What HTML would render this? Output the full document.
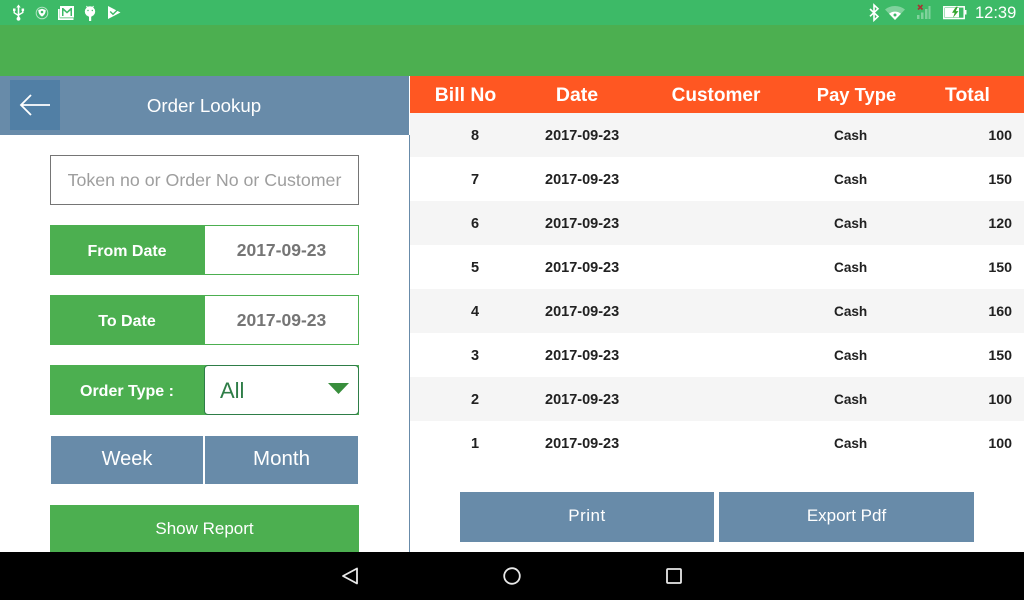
<!DOCTYPE html>
<html><head><meta charset="utf-8"><style>
html,body{margin:0;padding:0;width:1024px;height:600px;overflow:hidden;background:#fff}
body{position:relative;font-family:"Liberation Sans",sans-serif}
.a{position:absolute;box-sizing:border-box}
.c{position:absolute;box-sizing:border-box;display:flex;align-items:center;justify-content:center;white-space:nowrap}
.g{background:#4caf50;color:#fff;font-weight:700;font-size:16px;padding-top:3px}
.b{background:#688ba9;color:#fff;font-size:20px}
.d{background:#fff;border:1px solid #4caf50;color:#757575;font-weight:700;font-size:17.5px;padding-top:1px}
.r{position:absolute;left:410px;width:614px;height:44px}
.r span{position:absolute;top:1px;line-height:44px;font-weight:700;font-size:14.5px;color:#212121;white-space:nowrap}
.r span:nth-child(3){font-size:13.6px}
.r span:nth-child(4){font-size:14.2px}
.h{position:absolute;top:77px;line-height:37px;font-weight:700;font-size:19px;color:#fff;white-space:nowrap;transform:translateX(-50%)}
</style></head><body>
<div class="a" style="left:0;top:0;width:1024px;height:25px;background:#3dba67"></div>
<div class="a" style="left:0;top:25px;width:1024px;height:51px;background:#4caf50"></div>

<svg class="a" style="left:0;top:0" width="130" height="25" fill="#fff" stroke="none">
<path d="M18.5 6V19" stroke="#fff" stroke-width="1.6"/><path d="M18.5 4.5l-2.2 3h4.400z"/><path d="M14.2 10.500v2.300l4.300 2.700M22.800 10.500v2l-4.300 2.500" fill="none" stroke="#fff" stroke-width="1.4"/><circle cx="18.5" cy="18.800" r="1.900"/><rect x="13" y="8.500" width="2.500" height="2.500"/><rect x="21.600" y="8.500" width="2.500" height="2.500"/>
<circle cx="42" cy="13" r="5.800" fill="none" stroke="#fff" stroke-opacity=".6"/><path d="M38.300 10l3.700-1.200 3.700 1.200c0 3-1.200 5.200-3.700 6.600-2.500-1.400-3.700-3.600-3.700-6.600z"/><circle cx="42" cy="12" r="1.300" fill="#3dba67"/>
<path d="M58 9v11h15.500v-1.700H59.700V9z"/><rect x="60" y="6" width="14" height="11.500"/><path d="M62 8v8h1.500v-5.500l3.500 3 3.500-3V16H72V8h-1.300L67 11.500 63.300 8z" fill="#3dba67"/>
<circle cx="90" cy="11.500" r="5.200"/><rect x="89" y="15" width="2.200" height="6"/><path d="M86.500 6l1.300 2M93.500 6l-1.300 2" stroke="#fff"/><circle cx="88" cy="10.500" r=".7" fill="#3dba67"/><circle cx="92.300" cy="10.500" r=".7" fill="#3dba67"/>
<path d="M108 6L120.500 12.500 108 19z"/><path d="M110.200 11.500l2.800 2.800 4.800-4.700" stroke="#3dba67" stroke-width="1.400" fill="none"/>
</svg>

<svg class="a" style="left:860px;top:0" width="110" height="25">
<path d="M10 9l8 7.500-4 3.800V5l4 3.800-8 7.500" fill="none" stroke="#fff" stroke-width="1.600"/>
<path d="M25 9.500a16 16 0 0 1 20 0L35 20z" fill="#fff" fill-opacity=".35"/><path d="M29 13.800a9.500 9.500 0 0 1 12 0L35 20z" fill="#fff"/><circle cx="35" cy="15" r="1.500" fill="#3dba67"/>
<g fill="#fff" fill-opacity=".35"><rect x="57" y="15" width="2.500" height="4"/><rect x="61" y="12.500" width="2.500" height="6.500"/><rect x="65" y="9" width="2.500" height="10"/><rect x="68.500" y="6" width="2" height="13"/></g>
<path d="M58 5l4.500 4.500M62.500 5L58 9.500" stroke="#a33" stroke-width="1.600"/>
<rect x="83.800" y="6.800" width="20.400" height="11.700" fill="none" stroke="#fff" stroke-width="1.500"/><rect x="85" y="8" width="14" height="9.300" fill="#fff"/><rect x="105" y="10" width="1.500" height="4.500" fill="#fff"/><path d="M96 6.800l-4 6h2.700l-1.700 5 5.500-6.700h-2.700l2-4.300z" fill="#35a52f"/>
</svg>
<div class="a" style="left:975px;top:0;line-height:26px;font-size:16.5px;color:#fff">12:39</div>

<div class="a" style="left:0;top:76px;width:409px;height:59px;background:#688ba9"></div>
<div class="a" style="left:10px;top:80px;width:50px;height:50px;background:#517fa5"></div>
<svg class="a" style="left:10px;top:80px" width="50" height="50"><path d="M40 25H11M21 15L11 25l10 10" fill="none" stroke="#fff" stroke-width="1.800"/></svg>
<div class="c" style="left:0;top:76px;width:408px;height:59px;color:#fff;font-size:18.700px">Order Lookup</div>
<div class="a" style="left:409px;top:135px;width:1px;height:417px;background:#688ba9"></div>

<div class="c" style="left:50px;top:155px;width:309px;height:50px;border:1px solid #757575;color:#9e9e9e;font-size:17.800px">Token no or Order No or Customer</div>

<div class="c g" style="left:50px;top:225px;width:154px;height:50px">From Date</div>
<div class="c d" style="left:204px;top:225px;width:155px;height:50px">2017-09-23</div>
<div class="c g" style="left:50px;top:295px;width:154px;height:50px">To Date</div>
<div class="c d" style="left:204px;top:295px;width:155px;height:50px">2017-09-23</div>
<div class="c g" style="left:50px;top:365px;width:309px;height:50px;justify-content:flex-start;padding-left:30px">Order Type :</div>
<div class="a" style="left:204px;top:365px;width:155px;height:50px;background:#fff;border:1px solid #2e7d47;border-radius:4px;color:#2e7d47;font-size:22px;line-height:50px;padding-left:15px">All</div>
<svg class="a" style="left:328px;top:383px" width="22" height="12"><path d="M0 0h21L10.500 11z" fill="#388e3c"/></svg>

<div class="c b" style="left:51px;top:436px;width:152px;height:48px;padding-bottom:2px">Week</div>
<div class="c b" style="left:205px;top:436px;width:153px;height:48px;padding-bottom:2px;font-size:20.500px">Month</div>
<div class="c" style="left:50px;top:505px;width:309px;height:47px;background:#4caf50;color:#fff;font-size:17px">Show Report</div>

<div class="a" style="left:410px;top:76px;width:614px;height:37px;background:#ff5722"></div>
<div class="h" style="left:465.500px;font-size:19.400px">Bill No</div>
<div class="h" style="left:577px;font-size:19.500px">Date</div>
<div class="h" style="left:716px;font-size:19px">Customer</div>
<div class="h" style="left:856.500px;font-size:18.400px;top:76px">Pay Type</div>
<div class="h" style="left:967.500px;font-size:19.400px">Total</div>

<div class="r" style="top:113px;background:#f5f5f5"><span style="left:61px">8</span><span style="left:135px">2017-09-23</span><span style="left:424px">Cash</span><span style="right:12px">100</span></div>
<div class="r" style="top:157px"><span style="left:61px">7</span><span style="left:135px">2017-09-23</span><span style="left:424px">Cash</span><span style="right:12px">150</span></div>
<div class="r" style="top:201px;background:#f5f5f5"><span style="left:61px">6</span><span style="left:135px">2017-09-23</span><span style="left:424px">Cash</span><span style="right:12px">120</span></div>
<div class="r" style="top:245px"><span style="left:61px">5</span><span style="left:135px">2017-09-23</span><span style="left:424px">Cash</span><span style="right:12px">150</span></div>
<div class="r" style="top:289px;background:#f5f5f5"><span style="left:61px">4</span><span style="left:135px">2017-09-23</span><span style="left:424px">Cash</span><span style="right:12px">160</span></div>
<div class="r" style="top:333px"><span style="left:61px">3</span><span style="left:135px">2017-09-23</span><span style="left:424px">Cash</span><span style="right:12px">150</span></div>
<div class="r" style="top:377px;background:#f5f5f5"><span style="left:61px">2</span><span style="left:135px">2017-09-23</span><span style="left:424px">Cash</span><span style="right:12px">100</span></div>
<div class="r" style="top:421px"><span style="left:61px">1</span><span style="left:135px">2017-09-23</span><span style="left:424px">Cash</span><span style="right:12px">100</span></div>

<div class="c b" style="left:460px;top:492px;width:254px;height:50px;font-size:17px;letter-spacing:.5px;padding-bottom:2px">Print</div>
<div class="c b" style="left:719px;top:492px;width:255px;height:50px;font-size:17px;padding-bottom:2px">Export Pdf</div>

<div class="a" style="left:0;top:552px;width:1024px;height:48px;background:#000"></div>
<svg class="a" style="left:0;top:552px" width="1024" height="48" fill="none" stroke="#e8e8e8" stroke-width="1.800">
<path d="M357 16.500v15L343 24z" stroke-linejoin="round"/>
<circle cx="512" cy="24" r="7.800"/>
<rect x="667" y="17" width="14" height="14" rx="1"/>
</svg>
</body></html>
